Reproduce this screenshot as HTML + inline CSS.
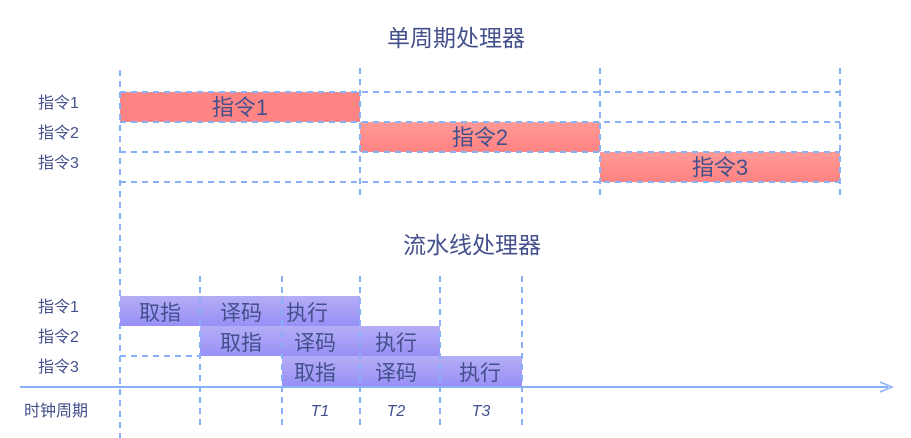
<!DOCTYPE html><html><head><meta charset="utf-8"><style>body{margin:0;background:#fff}svg{display:block}text{font-family:"Liberation Sans","Noto Sans CJK SC",sans-serif;fill:#44508c}</style></head><body>
<svg width="911" height="438" xmlns="http://www.w3.org/2000/svg">
<defs>
<linearGradient id="r" x1="0" y1="0" x2="0" y2="1"><stop offset="0" stop-color="#ff9a96"/><stop offset="1" stop-color="#ff8282"/></linearGradient>
<linearGradient id="p" x1="0" y1="0" x2="0" y2="1"><stop offset="0" stop-color="#b4aef6"/><stop offset="1" stop-color="#9890f6"/></linearGradient>
</defs>
<text x="456" y="46" font-size="23" text-anchor="middle">单周期处理器</text>
<rect x="120" y="92" width="240" height="30" fill="#ff8585"/>
<rect x="360" y="122" width="240" height="30" fill="url(#r)"/>
<rect x="600" y="152" width="240" height="30" fill="url(#r)"/>
<g stroke="#88b0f6" stroke-width="2" stroke-dasharray="6,5">
<line x1="120" y1="70" x2="120" y2="438"/><line x1="360" y1="68" x2="360" y2="198"/><line x1="600" y1="68" x2="600" y2="198"/><line x1="840" y1="68" x2="840" y2="198"/>
<line x1="120" y1="92" x2="840" y2="92"/><line x1="120" y1="122" x2="840" y2="122"/><line x1="120" y1="152" x2="840" y2="152"/><line x1="120" y1="182" x2="840" y2="182"/>
</g>
<g font-size="22" text-anchor="middle"><text x="240" y="115">指令1</text><text x="480" y="145">指令2</text><text x="720" y="175">指令3</text></g>
<g font-size="16"><text x="38" y="108">指令1</text><text x="38" y="138">指令2</text><text x="38" y="168">指令3</text></g>
<text x="472" y="253" font-size="23" text-anchor="middle">流水线处理器</text>
<rect x="120" y="296" width="240" height="30" fill="url(#p)"/>
<rect x="200" y="326" width="240" height="30" fill="url(#p)"/>
<rect x="282" y="356" width="240" height="30" fill="url(#p)"/>
<g stroke="#88b0f6" stroke-width="2" stroke-dasharray="6,5">
<line x1="200" y1="276" x2="200" y2="428"/><line x1="282" y1="276" x2="282" y2="428"/><line x1="360" y1="276" x2="360" y2="428"/><line x1="440" y1="276" x2="440" y2="428"/><line x1="522" y1="276" x2="522" y2="428"/>
<line x1="120" y1="356" x2="200" y2="356"/>
</g>
<line x1="20" y1="387" x2="888" y2="387" stroke="#88b0f6" stroke-width="2"/>
<path d="M880 382 L892 387 L880 392" fill="none" stroke="#88b0f6" stroke-width="1.5"/>
<g font-size="21" text-anchor="middle">
<text x="160" y="320">取指</text><text x="241" y="320">译码</text><text x="307" y="320">执行</text>
<text x="241" y="350">取指</text><text x="315" y="350">译码</text><text x="396" y="350">执行</text>
<text x="315" y="380">取指</text><text x="396" y="380">译码</text><text x="480" y="380">执行</text>
</g>
<g font-size="16"><text x="38" y="312">指令1</text><text x="38" y="342">指令2</text><text x="38" y="372">指令3</text><text x="24" y="416">时钟周期</text></g>
<g font-size="16" font-style="italic" text-anchor="middle"><text x="320" y="416">T1</text><text x="396" y="416">T2</text><text x="481" y="416">T3</text></g>
</svg></body></html>
